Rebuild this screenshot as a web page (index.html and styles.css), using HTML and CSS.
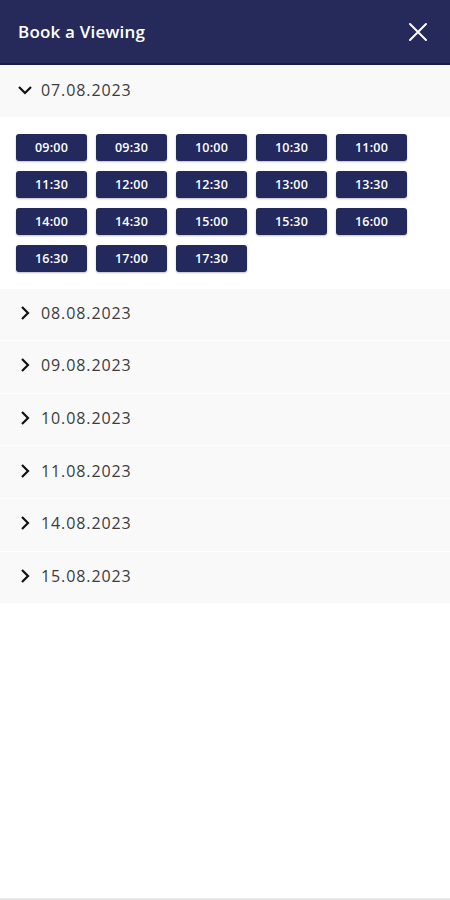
FILE: index.html
```html
<!DOCTYPE html>
<html lang="en">
<head>
    <meta charset="UTF-8">
    <meta name="viewport" content="width=device-width, initial-scale=1.0">
    <title>Book a Viewing</title>
    <link rel="stylesheet" href="styles.css">
</head>
<body>
    <div class="header">
        <h1>Book a Viewing</h1>
        <button class="close" aria-label="Close">
            <svg width="20" height="20" viewBox="0 0 20 20"><path d="M2 2 L18 18 M18 2 L2 18" stroke="white" stroke-width="2" stroke-linecap="round"/></svg>
        </button>
    </div>

    <div class="day open">
        <div class="dayHead first">
            <svg class="chev" width="16" height="16" viewBox="0 0 16 16"><path d="M2 5 L8 11 L14 5" fill="none" stroke="#111" stroke-width="2.2"/></svg>
            <span>07.08.2023</span>
        </div>
        <div class="slots">
            <button class="slot">09:00</button>
            <button class="slot">09:30</button>
            <button class="slot">10:00</button>
            <button class="slot">10:30</button>
            <button class="slot">11:00</button>
            <button class="slot">11:30</button>
            <button class="slot">12:00</button>
            <button class="slot">12:30</button>
            <button class="slot">13:00</button>
            <button class="slot">13:30</button>
            <button class="slot">14:00</button>
            <button class="slot">14:30</button>
            <button class="slot">15:00</button>
            <button class="slot">15:30</button>
            <button class="slot">16:00</button>
            <button class="slot">16:30</button>
            <button class="slot">17:00</button>
            <button class="slot">17:30</button>
        </div>
    </div>

    <div class="day">
        <div class="dayHead">
            <svg class="chev" width="16" height="16" viewBox="0 0 16 16"><path d="M5 2 L11 8 L5 14" fill="none" stroke="#111" stroke-width="2.2"/></svg>
            <span>08.08.2023</span>
        </div>
    </div>
    <div class="day">
        <div class="dayHead">
            <svg class="chev" width="16" height="16" viewBox="0 0 16 16"><path d="M5 2 L11 8 L5 14" fill="none" stroke="#111" stroke-width="2.2"/></svg>
            <span>09.08.2023</span>
        </div>
    </div>
    <div class="day">
        <div class="dayHead">
            <svg class="chev" width="16" height="16" viewBox="0 0 16 16"><path d="M5 2 L11 8 L5 14" fill="none" stroke="#111" stroke-width="2.2"/></svg>
            <span>10.08.2023</span>
        </div>
    </div>
    <div class="day">
        <div class="dayHead">
            <svg class="chev" width="16" height="16" viewBox="0 0 16 16"><path d="M5 2 L11 8 L5 14" fill="none" stroke="#111" stroke-width="2.2"/></svg>
            <span>11.08.2023</span>
        </div>
    </div>
    <div class="day">
        <div class="dayHead">
            <svg class="chev" width="16" height="16" viewBox="0 0 16 16"><path d="M5 2 L11 8 L5 14" fill="none" stroke="#111" stroke-width="2.2"/></svg>
            <span>14.08.2023</span>
        </div>
    </div>
    <div class="day">
        <div class="dayHead">
            <svg class="chev" width="16" height="16" viewBox="0 0 16 16"><path d="M5 2 L11 8 L5 14" fill="none" stroke="#111" stroke-width="2.2"/></svg>
            <span>15.08.2023</span>
        </div>
    </div>

    <div class="footer"></div>
</body>
</html>
```

FILE: styles.css
```css
body {
    font-family: 'Open Sans', Arial, sans-serif;
    background-color: white;
    margin: 0;
    height: 900px;
    display: flex;
    flex-direction: column;
}
.header {
    height: 63px;
    background-color: rgb(38, 42, 90);
    border-bottom: 2px solid rgb(24, 27, 66);
    display: flex;
    align-items: center;
    justify-content: space-between;
    padding: 0 22px 0 18px;
}
.header h1 {
    margin: 0;
    color: white;
    font-size: 17px;
    font-weight: 600;
    letter-spacing: 0.2px;
}
.close {
    background: none;
    border: none;
    padding: 0;
    width: 20px;
    height: 20px;
    display: flex;
}
.day {
    border-bottom: 1px solid white;
}
.dayHead {
    height: 51.6px;
    box-sizing: border-box;
    padding: 0 0 3px 17px;
    background-color: rgb(249, 249, 249);
    display: flex;
    align-items: center;
    gap: 8px;
    font-size: 16px;
    letter-spacing: 0.9px;
    color: rgb(60, 60, 60);
}
.dayHead.first {
    padding-bottom: 1px;
}
.chev {
    flex: none;
}
.slots {
    display: grid;
    grid-template-columns: repeat(5, 71px);
    gap: 10px 9px;
    padding: 17px 16px 16px;
    background-color: white;
}
.slot {
    height: 27px;
    border: none;
    border-radius: 3px;
    background-color: rgb(35, 41, 92);
    color: white;
    font-family: inherit;
    font-size: 12.5px;
    font-weight: 600;
    letter-spacing: 0.2px;
    box-shadow: 0 1px 2px rgba(0, 0, 0, 0.25);
    padding: 0;
}
.footer {
    margin-top: auto;
    height: 2px;
    background-color: rgb(232, 232, 232);
}
```
